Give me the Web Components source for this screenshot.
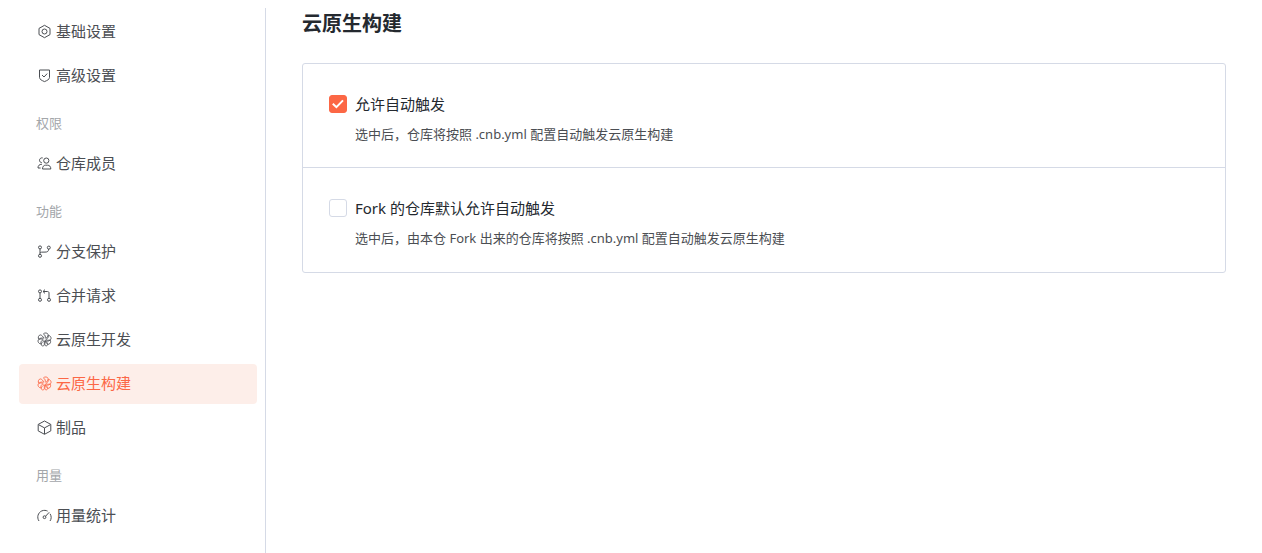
<!DOCTYPE html>
<html lang="zh-CN">
<head>
<meta charset="utf-8">
<meta name="viewport" content="width=device-width, initial-scale=1">
<title>云原生构建</title>
<style>
  body {
    margin: 0;
    background: #fff;
    color: #24292f;
    font-family: "Noto Sans", "Noto Sans CJK SC", sans-serif;
    --accent: #fc6745;
    --accent-soft: #fdeee9;
    --line: #d5dae6;
    --text: #4b4e53;
    --muted: #a3a6aa;
  }
</style>
</head>
<body>
<settings-page>
  <nav-group slot="nav">
    <nav-item icon="gear">基础设置</nav-item>
    <nav-item icon="shield">高级设置</nav-item>
  </nav-group>
  <nav-group slot="nav" label="权限">
    <nav-item icon="members">仓库成员</nav-item>
  </nav-group>
  <nav-group slot="nav" label="功能">
    <nav-item icon="branch">分支保护</nav-item>
    <nav-item icon="merge">合并请求</nav-item>
    <nav-item icon="fan">云原生开发</nav-item>
    <nav-item icon="fan" active>云原生构建</nav-item>
    <nav-item icon="box">制品</nav-item>
  </nav-group>
  <nav-group slot="nav" label="用量">
    <nav-item icon="gauge">用量统计</nav-item>
  </nav-group>
  <span slot="title">云原生构建</span>
  <option-card>
    <setting-option checked>
      允许自动触发
      <span slot="description">选中后，仓库将按照 .cnb.yml 配置自动触发云原生构建</span>
    </setting-option>
    <setting-option>
      Fork 的仓库默认允许自动触发
      <span slot="description">选中后，由本仓 Fork 出来的仓库将按照 .cnb.yml 配置自动触发云原生构建</span>
    </setting-option>
  </option-card>
</settings-page>

<script>
  const blade = '<path d="M.4-1.2C.6-3-.2-4.6-2.2-5.2C-1.4-7 1.8-7.4 2.6-5.4C2.8-3.8 2-2.4 1-1.4"/>';
  const blades = [12, 66, 118, 242, 294]
    .map(angle => `<g transform="rotate(${angle})">${blade}</g>`).join('');

  const ICONS = {
    gear: '<path d="M7.5 1.3L13 4.4V10.6L7.5 13.7L2 10.6V4.4Z"/><circle cx="7.5" cy="7.5" r="2.5"/>',
    shield: '<path d="M2.5 2H12.5V9.5C12.5 11.3 10.2 12.5 7.5 13.6C4.8 12.5 2.5 11.3 2.5 9.5Z"/><path d="M5 7L7 9L10.2 5.6"/>',
    members: '<circle cx="9.3" cy="4.6" r="2.6"/><path d="M5.5 13C5.5 10.5 6.8 9.2 8.5 9.2H10.6C12.5 9.2 13.8 10.5 13.8 13Z"/><path d="M5.7 1.9C3.9 1.5 2.5 2.8 2.5 4.3C2.5 5.6 3.5 6.6 4.8 6.7M4.9 8.3C2.2 8.3 1 9.6 1 12H3.6"/>',
    branch: '<circle cx="3" cy="3.4" r="1.5"/><circle cx="3" cy="11.8" r="1.5"/><circle cx="11.8" cy="3.6" r="1.5"/><path d="M3 4.8V10.4M3 9.2C3.5 7.8 5 8.2 8 8.1C10.5 8.1 11.5 7.5 11.7 5"/>',
    merge: '<circle cx="3" cy="3.4" r="1.5"/><circle cx="3" cy="11.8" r="1.5"/><circle cx="12" cy="11.8" r="1.5"/><path d="M3 4.8V10.4M6 3.5H10.5C11.4 3.5 12 4 12 5V10.4M8 1.6L6 3.5L8 5.4"/>',
    fan: `<g transform="translate(7.5 7.5)" stroke-width=".8">${blades}<path d="M-.4 1C-2 2.4-3.6 4-3.2 5.6C-2.2 7-.6 6.6-.2 5.4V1.2M.4 1.2V5.4C.8 6.8 2.4 6.8 3.2 5.4C3.2 3.6 2.2 2.2 .8 1"/></g>`,
    box: '<path d="M7.5 1L13.8 4.4V10.9L7.5 14.3L1.2 10.9V4.4ZM1.6 4.7L7.5 7.9L13.4 4.7M7.5 7.9V14"/>',
    gauge: '<path d="M2 13C-.5 9.4 1.1 4.5 4.8 2.9C7 2 9 2.3 10.6 3.1M13.1 5.8C14.6 8.3 14.5 11 13 13M8.5 8.3L12.2 4.3"/><circle cx="7.5" cy="9.2" r="1.4"/>'
  };

  function define(name, html, setup) {
    const template = document.createElement('template');
    template.innerHTML = html;
    customElements.define(name, class extends HTMLElement {
      constructor() {
        super();
        this.attachShadow({ mode: 'open' }).append(template.content.cloneNode(true));
      }
      connectedCallback() {
        if (setup) setup(this, this.shadowRoot);
      }
    });
  }

  define('settings-page', `
    <style>
      :host { display: flex; box-sizing: border-box; min-height: 100vh; padding-top: 8px; }
      nav { flex: none; box-sizing: border-box; width: 266px; padding: 4px 8px 0 19px; border-right: 1px solid var(--line); }
      main { flex: 1; min-width: 0; padding: 0 36px; }
      h1 { margin: 0 0 23px; font-size: 20px; line-height: 32px; font-weight: 700; }
    </style>
    <nav aria-label="设置"><slot name="nav"></slot></nav>
    <main><h1><slot name="title"></slot></h1><slot></slot></main>
  `);

  define('nav-group', `
    <style>
      :host { display: block; }
      h2 { margin: 8px 0 0; padding: 0 17px 2px; font-size: 13px; line-height: 38px; font-weight: 400; color: var(--muted); }
      h2[hidden] { display: none; }
      div { display: grid; gap: 4px; }
    </style>
    <h2></h2>
    <div><slot></slot></div>
  `, (host, root) => {
    const heading = root.querySelector('h2');
    heading.textContent = host.getAttribute('label') || '';
    heading.hidden = !host.hasAttribute('label');
  });

  define('nav-item', `
    <style>
      :host { display: block; }
      a { display: flex; box-sizing: border-box; align-items: center; gap: 4px; height: 40px; padding: 0 18px 2px; border-radius: 4px;
          color: var(--text); font-size: 15px; line-height: 24px; text-decoration: none; }
      svg { flex: none; width: 15px; height: 15px; fill: none; stroke: currentColor; stroke-width: 1; stroke-linejoin: round; }
      :host([active]) a { background: var(--accent-soft); color: var(--accent); }
    </style>
    <a href="#"><svg viewBox="0 0 15 15" aria-hidden="true"></svg><slot></slot></a>
  `, (host, root) => {
    root.querySelector('svg').innerHTML = ICONS[host.getAttribute('icon')];
    if (host.hasAttribute('active')) root.querySelector('a').setAttribute('aria-current', 'page');
  });

  define('option-card', `
    <style>
      :host { display: block; padding-bottom: 1px; border: 1px solid var(--line); border-radius: 3px; }
      ::slotted(:not(:first-child)) { border-top: 1px solid var(--line); }
    </style>
    <slot></slot>
  `);

  define('setting-option', `
    <style>
      :host { display: block; padding: 26px 26px 23px; }
      .row { display: grid; grid-template-columns: 18px 1fr; column-gap: 8px; row-gap: 6px; align-items: center; }
      .check { display: grid; width: 18px; height: 18px; }
      .check > * { grid-area: 1 / 1; }
      input { appearance: none; box-sizing: border-box; width: 18px; height: 18px; margin: 0; border: 1px solid var(--line); border-radius: 3px; background: #fff; }
      input:checked { border-color: var(--accent); background: var(--accent); }
      svg { visibility: hidden; pointer-events: none; z-index: 1; fill: none; stroke: #fff; stroke-width: 2; }
      input:checked + svg { visibility: visible; }
      label { font-size: 15px; line-height: 28px; }
      p { grid-column: 2; margin: 0; font-size: 13px; line-height: 20px; color: var(--text); }
    </style>
    <div class="row">
      <span class="check">
        <input type="checkbox" id="option" aria-describedby="description">
        <svg viewBox="0 0 18 18" aria-hidden="true"><path d="M3.8 8.7L7.4 12.2L14 5.4"/></svg>
      </span>
      <label for="option"><slot></slot></label>
      <p id="description"><slot name="description"></slot></p>
    </div>
  `, (host, root) => {
    root.querySelector('input').checked = host.hasAttribute('checked');
  });
</script>
</body>
</html>
